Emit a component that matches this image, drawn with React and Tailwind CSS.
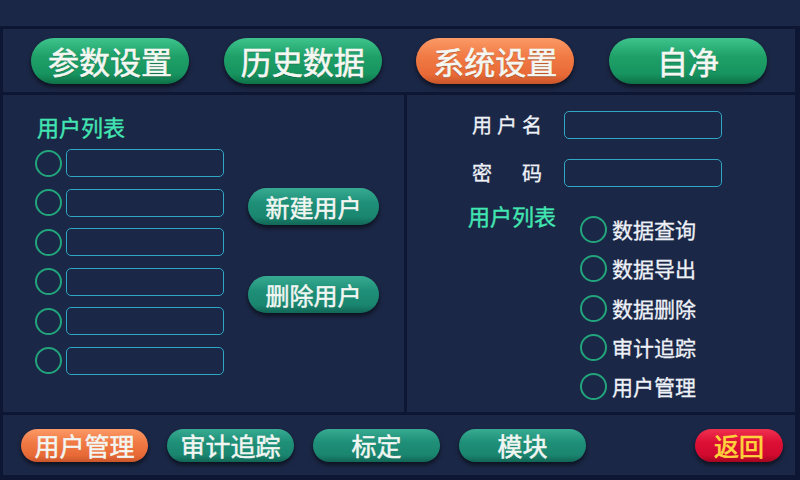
import React from "react";

const font = { fontFamily: '"Noto Sans CJK SC", "Noto Sans", sans-serif' };

function NavBtn({ label, orange }) {
  return (
    <div
      className={
        "w-[158px] h-[46px] rounded-full flex items-center justify-center text-[31px] leading-none text-[#f4f7f2] [-webkit-text-stroke:0.6px_#f4f7f2] shadow-[0_3px_4px_rgba(0,0,0,0.55)] [text-shadow:0_1px_1px_rgba(0,0,0,0.35)] " +
        (orange
          ? "bg-[linear-gradient(to_bottom,#fb9a66,#f17a45_40%,#e86a36_80%,#c9552a)]"
          : "bg-[linear-gradient(to_bottom,#3ec48d,#1fa068_40%,#179460_78%,#0e7147)]")
      }
    >
      {label}
    </div>
  );
}

function SmallBtn({ label, variant, w = "w-[127px]", h = "h-[33px]", size = "text-[25px]" }) {
  let bg =
    "bg-[linear-gradient(to_bottom,#37ab92,#1f8f78_40%,#1a8670_78%,#126655)]";
  let tc = "text-[#f2f6f2] [-webkit-text-stroke:0.5px_#f2f6f2]";
  if (variant === "orange") {
    bg = "bg-[linear-gradient(to_bottom,#fb9a66,#f17a45_40%,#e86a36_80%,#c9552a)]";
  } else if (variant === "red") {
    bg = "bg-[linear-gradient(to_bottom,#f0304f,#dc0f35_40%,#d20a30_78%,#a5061f)]";
    tc = "text-[#ffd43c] [-webkit-text-stroke:0.7px_#ffd43c]";
  }
  return (
    <div
      className={`${w} ${h} rounded-full flex items-center justify-center ${size} leading-none ${tc} ${bg} shadow-[0_3px_4px_rgba(0,0,0,0.55)]`}
    >
      {label}
    </div>
  );
}

function Circle() {
  return (
    <div className="w-[27px] h-[27px] rounded-full border-[2px] border-[#22a57c] shrink-0" />
  );
}

function Input() {
  return (
    <div className="w-[158px] h-[28px] rounded-[5px] border border-[#2ea6c4] shrink-0" />
  );
}

export default function App() {
  const perms = ["数据查询", "数据导出", "数据删除", "审计追踪", "用户管理"];
  return (
    <div
      className="w-[800px] h-[480px] bg-[#0d1733] flex flex-col overflow-hidden"
      style={font}
    >
      <div className="h-[26px] bg-[#1b2746] shrink-0" />
      <div className="flex-1 flex flex-col gap-[3px] pt-[3px] pl-[3px] pr-[5px] pb-[5px]">
        {/* Nav */}
        <div className="h-[63px] bg-[#1b2746] flex items-center justify-between px-[28px] shrink-0">
          <NavBtn label="参数设置" />
          <NavBtn label="历史数据" />
          <NavBtn label="系统设置" orange />
          <NavBtn label="自净" />
        </div>

        {/* Main */}
        <div className="h-[317px] flex gap-[3px] shrink-0">
          {/* Left */}
          <div className="w-[401px] bg-[#1b2746] flex pl-[32px]">
            <div className="flex flex-col">
              <div className="mt-[17px] ml-[2px] text-[22px] leading-[28px] text-[#42e6b2] [-webkit-text-stroke:0.4px_#42e6b2]">
                用户列表
              </div>
              <div className="mt-[9px] flex flex-col gap-[11.5px]">
                {[0, 1, 2, 3, 4, 5].map((i) => (
                  <div key={i} className="flex items-center gap-[4px]">
                    <Circle />
                    <Input />
                  </div>
                ))}
              </div>
            </div>
            <div className="ml-[24px] pt-[93px] flex flex-col gap-[51px]">
              <SmallBtn label="新建用户" w="w-[131px]" h="h-[37px]" size="text-[24px]" />
              <SmallBtn label="删除用户" w="w-[131px]" h="h-[37px]" size="text-[24px]" />
            </div>
          </div>

          {/* Right */}
          <div className="flex-1 bg-[#1b2746] pl-[65px] pt-[16px] flex flex-col">
            <div className="flex items-center h-[28px]">
              <div className="w-[92px] text-[20px] leading-none tracking-[5px] text-[#eef2f8] [-webkit-text-stroke:0.3px_#eef2f8]">
                用户名
              </div>
              <Input />
            </div>
            <div className="flex items-center h-[28px] mt-[20px]">
              <div className="w-[92px] text-[20px] leading-none tracking-[5px] text-[#eef2f8] [-webkit-text-stroke:0.3px_#eef2f8]">
                密　码
              </div>
              <Input />
            </div>
            <div className="flex mt-[14px] -ml-[4px]">
              <div className="text-[22px] leading-[28px] text-[#42e6b2] [-webkit-text-stroke:0.4px_#42e6b2]">
                用户列表
              </div>
              <div className="ml-[24px] mt-[15px] flex flex-col gap-[12.3px]">
                {perms.map((p) => (
                  <div key={p} className="flex items-center gap-[5px] h-[27px]">
                    <Circle />
                    <span className="text-[21px] leading-none text-[#eef2f8] [-webkit-text-stroke:0.3px_#eef2f8]">
                      {p}
                    </span>
                  </div>
                ))}
              </div>
            </div>
          </div>
        </div>

        {/* Bottom */}
        <div className="flex-1 bg-[#1b2746] flex items-center pl-[18px] pr-[12px]">
          <div className="flex gap-[19px]">
            <SmallBtn label="用户管理" variant="orange" />
            <SmallBtn label="审计追踪" />
            <SmallBtn label="标定" />
            <SmallBtn label="模块" />
          </div>
          <div className="ml-auto">
            <SmallBtn label="返回" variant="red" w="w-[88px]" />
          </div>
        </div>
      </div>
    </div>
  );
}
